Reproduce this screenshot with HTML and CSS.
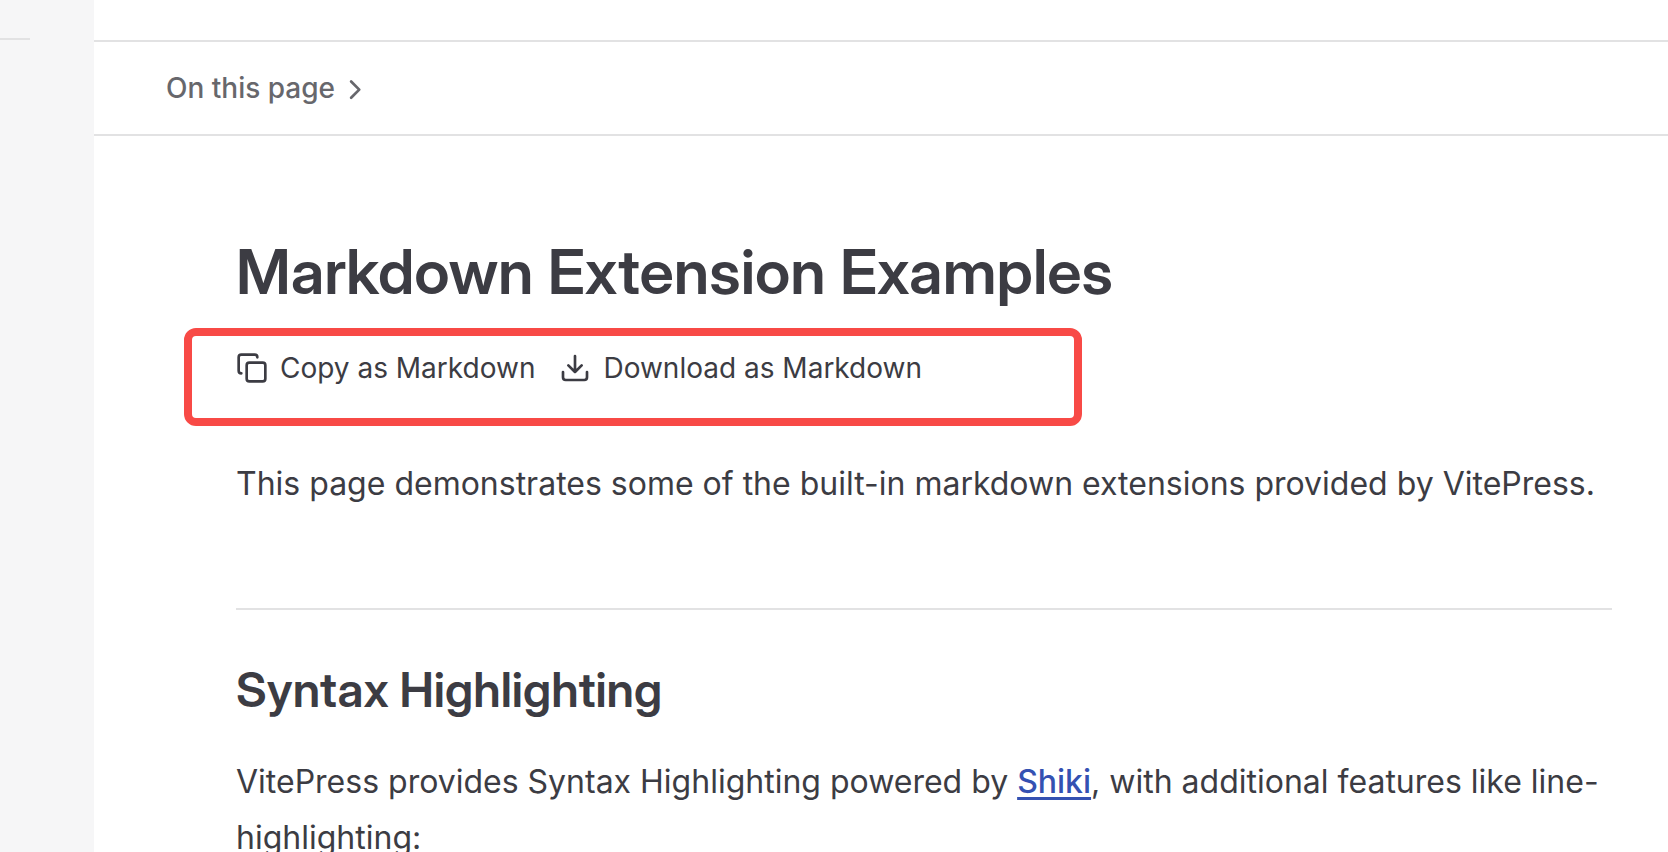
FILE: index.html
```html
<!DOCTYPE html>
<html lang="en">
<head>
<meta charset="utf-8">
<title>Markdown Extension Examples</title>
<link rel="stylesheet" href="styles.css">
</head>
<body>
<div class="layout">
  <aside class="sidebar"><hr class="sidebar-divider"></aside>
  <main class="main">
    <div class="local-nav">
      <button class="outline-button" type="button">
        <span>On this page</span>
        <svg class="chevron" viewBox="0 0 24 24" aria-hidden="true"><path d="M7.500 6l7.500 7.500L7.500 21"/></svg>
      </button>
    </div>
    <article class="doc">
      <h1>Markdown Extension Examples</h1>
      <div class="actions">
        <button class="action" type="button">
          <svg class="icon" viewBox="0 0 24 24" aria-hidden="true"><rect x="8" y="8" width="14" height="14" rx="2"/><path d="M4 16c-1.100 0-2-.9-2-2V4c0-1.100.9-2 2-2h10c1.100 0 2 .9 2 2"/></svg>
          <span>Copy as Markdown</span>
        </button>
        <button class="action" type="button">
          <svg class="icon" viewBox="0 0 24 24" aria-hidden="true"><path d="M21 15v4a2 2 0 0 1-2 2H5a2 2 0 0 1-2-2v-4M7 10l5 5 5-5M12 15V3"/></svg>
          <span>Download as Markdown</span>
        </button>
      </div>
      <p>This page demonstrates some of the built-in markdown extensions provided by VitePress.</p>
      <h2>Syntax Highlighting</h2>
      <p>VitePress provides Syntax Highlighting powered by <a href="#shiki">Shiki</a>, with additional features like line-highlighting:</p>
    </article>
  </main>
</div>
</body>
</html>
```
FILE: styles.css
```css
* {
  box-sizing: border-box;
}

body {
  margin: 0;
  background: #fff;
  color: #3c3c43;
  font-family: Inter, "Liberation Sans", sans-serif;
  font-size: 32px;
  line-height: 56px;
  overflow: hidden;
}

button {
  display: flex;
  align-items: center;
  padding: 0;
  border: 0;
  background: none;
  color: inherit;
  font: inherit;
  cursor: pointer;
}

svg {
  flex: none;
  fill: none;
  stroke: currentColor;
  stroke-width: 2;
  stroke-linecap: round;
  stroke-linejoin: round;
}

.layout {
  display: flex;
  height: 100vh;
}

.sidebar {
  flex: none;
  width: 94px;
  padding-top: 38px;
  background: #f6f6f7;
}

.sidebar-divider {
  width: 30px;
  margin: 0;
  border: 0;
  border-top: 2px solid #e2e2e3;
}

.main {
  flex: 1;
  min-width: 0;
  padding-top: 40px;
}

.local-nav {
  padding: 22px 72px;
  border-top: 2px solid #e2e2e3;
  border-bottom: 2px solid #e2e2e3;
}

.outline-button {
  gap: 8px;
  color: #67676c;
  font-size: 28px;
  font-weight: 500;
  line-height: 48px;
}

.chevron {
  width: 26px;
  height: 26px;
  stroke-width: 2.5;
}

.doc {
  padding: 96px 56px 0 142px;
}

h1,
h2 {
  font-family: "Inter Display", Inter, "Liberation Sans", sans-serif;
  font-weight: 600;
}

h1 {
  margin: 0;
  font-size: 62px;
  line-height: 80px;
}

h2 {
  margin: 96px 0 32px;
  padding-top: 48px;
  border-top: 2px solid #e2e2e3;
  font-size: 48px;
  line-height: 64px;
}

p {
  margin: 0;
}

a {
  color: #3451b2;
  font-weight: 500;
  text-decoration: underline;
  text-decoration-thickness: 3px;
  text-underline-offset: 4px;
}

.actions {
  display: flex;
  align-items: flex-start;
  gap: 24px;
  width: 898px;
  max-width: 100%;
  margin: 16px 0 30px -52px;
  padding: 8px 44px 26px;
  border: 8px solid #f84a46;
  border-radius: 12px;
}

.action {
  gap: 12px;
  font-size: 28px;
  line-height: 48px;
}

.icon {
  width: 32px;
  height: 32px;
}
```
